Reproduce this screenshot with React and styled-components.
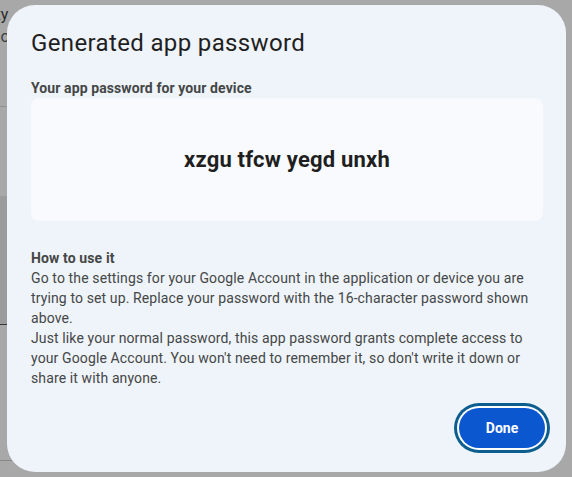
import React from "react";
import styled, { createGlobalStyle } from "styled-components";

const Global = createGlobalStyle`
  html, body { margin: 0; padding: 0; background: #ffffff; }
  body { font-family: Roboto, "Noto Sans", Arial, sans-serif; overflow: hidden; }
  * { box-sizing: border-box; }
`;

const Page = styled.div`
  width: 572px;
  height: 477px;
  display: flex;
  flex-direction: column;
  margin-left: -44px;
  color: #555;
  font-size: 16px;
`;

const PageSection = styled.section`
  height: ${(p) => p.$h}px;
  padding: ${(p) => p.$pad || "6px 0 0 0"};
  border-bottom: 1px solid ${(p) => p.$line || "#dadce0"};
  background: ${(p) => p.$bg || "#fff"};
  display: flex;
  flex-direction: column;
  gap: ${(p) => p.$gap || 6}px;
`;

const PageText = styled.div`
  line-height: 18px;
  white-space: nowrap;
  color: ${(p) => p.$c || "#5f6368"};
`;

const Link = styled.span`
  color: #6a2f9a;
`;

const Scrim = styled.div`
  position: fixed;
  inset: 0;
  background: rgba(0, 0, 0, 0.34);
`;

const Dialog = styled.div`
  position: fixed;
  left: 7px;
  top: 5px;
  width: 559px;
  height: 467px;
  border-radius: 28px;
  background: #eff3fa;
  padding: 22px 21px 24px 24px;
  display: flex;
  flex-direction: column;
`;

const Title = styled.h1`
  margin: 0;
  font-family: Roboto, "Noto Sans", sans-serif;
  font-weight: 400;
  font-size: 24px;
  line-height: 32px;
  letter-spacing: 0.36px;
  color: #1f1f1f;
`;

const Label = styled.div`
  margin-top: 19px;
  font-size: 14px;
  font-weight: 700;
  line-height: 20px;
  letter-spacing: 0.1px;
  color: #444746;
`;

const PasswordBox = styled.div`
  height: 123px;
  margin-right: 2px;
  border-radius: 8px;
  background: #f8fafe;
  display: flex;
  align-items: center;
  justify-content: center;
`;

const Password = styled.div`
  font-size: 22px;
  font-weight: 700;
  color: #1f1f1f;
  letter-spacing: 0.2px;
`;

const Help = styled.div`
  margin-top: 27px;
  font-size: 14px;
  line-height: 20px;
  letter-spacing: 0.12px;
  color: #444746;
`;

const HelpHeading = styled.div`
  font-weight: 700;
`;

const HelpPara = styled.p`
  margin: 0;
`;

const Actions = styled.div`
  margin-top: auto;
  display: flex;
  justify-content: flex-end;
`;

const Button = styled.button`
  width: 86px;
  height: 40px;
  border: none;
  border-radius: 20px;
  background: #0b57d0;
  color: #ffffff;
  font-family: Roboto, "Noto Sans", sans-serif;
  font-size: 14px;
  font-weight: 700;
  box-shadow: 0 0 0 2px #ffffff, 0 0 0 5px #0c5e8e;
  cursor: pointer;
`;

export default function App() {
  return (
    <>
      <Global />
      <Page>
        <PageSection $h={107} $gap={4}>
          <PageText $c="#444">Activity</PageText>
          <PageText>See more</PageText>
        </PageSection>
        <PageSection $h={90} $pad="28px 0 0 0" $gap={28} $line="#eee">
          <PageText $c="#1f1f1f">How</PageText>
          <PageText>Sa<Link>p</Link>p</PageText>
        </PageSection>
        <PageSection $h={128} $bg="#ececee" $line="#555" />
        <PageSection $h={136} $line="#cfcfcf" />
      </Page>
      <Scrim />
      <Dialog role="dialog" aria-label="Generated app password">
        <Title>Generated app password</Title>
        <Label>Your app password for your device</Label>
        <PasswordBox>
          <Password>xzgu tfcw yegd unxh</Password>
        </PasswordBox>
        <Help>
          <HelpHeading>How to use it</HelpHeading>
          <HelpPara>
            Go to the settings for your Google Account in the application or device you are
            trying to set up. Replace your password with the 16-character password shown
            above.
          </HelpPara>
          <HelpPara>
            Just like your normal password, this app password grants complete access to
            your Google Account. You won't need to remember it, so don't write it down or
            share it with anyone.
          </HelpPara>
        </Help>
        <Actions>
          <Button>Done</Button>
        </Actions>
      </Dialog>
    </>
  );
}
